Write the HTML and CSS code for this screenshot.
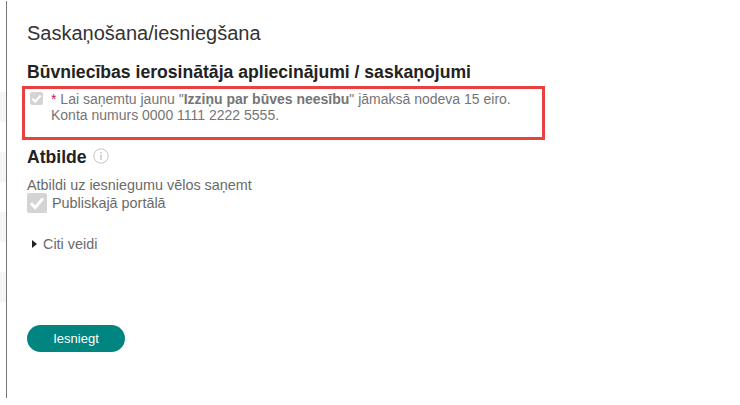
FILE: index.html
```html
<!DOCTYPE html>
<html lang="lv">
<head>
    <meta charset="UTF-8">
    <title>Saskaņošana/iesniegšana</title>
    <link rel="stylesheet" href="styles.css">
</head>
<body>
    <div class="side">
        <div class="side-row"></div>
        <div class="side-row"></div>
        <div class="side-row"></div>
        <div class="side-row"></div>
    </div>
    <main class="content">
        <h1>Saskaņošana/iesniegšana</h1>
        <h2 class="section-title">Būvniecības ierosinātāja apliecinājumi / saskaņojumi</h2>
        <div class="notice">
            <span class="check check-small">
                <svg viewBox="0 0 14 14" width="13" height="13"><path d="M2.6 7.2 5.7 10.3 11.4 3.8" fill="none" stroke="#fff" stroke-width="2.2"/></svg>
            </span>
            <p><span class="star">*</span> Lai saņemtu jaunu "<b>Izziņu par būves neesību</b>" jāmaksā nodeva 15 eiro.<br>Konta numurs 0000 1111 2222 5555.</p>
        </div>
        <div class="answer-title">
            <h2>Atbilde</h2>
            <svg class="info" viewBox="0 0 16 16" width="16" height="16">
                <circle cx="8" cy="8" r="7.2" fill="none" stroke="#c4c4c4" stroke-width="1"/>
                <circle cx="8" cy="4.6" r="0.9" fill="#c4c4c4"/>
                <rect x="7.3" y="6.8" width="1.4" height="5.2" fill="#c4c4c4"/>
            </svg>
        </div>
        <p class="answer-text">Atbildi uz iesniegumu vēlos saņemt</p>
        <label class="portal">
            <span class="check check-big">
                <svg viewBox="0 0 20 20" width="20" height="20"><path d="M4 10.4 8.2 14.6 16 5.4" fill="none" stroke="#fff" stroke-width="3"/></svg>
            </span>
            Publiskajā portālā
        </label>
        <div class="other"><span class="arrow"></span>Citi veidi</div>
        <button class="submit" type="button">Iesniegt</button>
    </main>
</body>
</html>
```

FILE: styles.css
```css
body {
    margin: 0;
    height: 405px;
    display: flex;
    background-color: #fff;
    font-family: "Liberation Sans", Arial, sans-serif;
    color: #6a6a6a;
    font-size: 14px;
    overflow: hidden;
}
.side {
    width: 7px;
    height: 397px;
    margin-top: 1px;
    padding-top: 91px;
    flex-shrink: 0;
    border-right: 1px solid #777;
    box-sizing: border-box;
}
.side-row {
    height: 30px;
    margin-bottom: 30px;
    background-color: #f5f5f5;
}
.content {
    padding: 20px 0 0 20px;
    flex: 1;
}
h1 {
    margin: 0;
    font-size: 20px;
    line-height: 26px;
    font-weight: normal;
    color: #333;
}
.section-title {
    margin: 14px 0 0;
    font-size: 17.6px;
    line-height: 24px;
    font-weight: bold;
    color: #222;
}
.notice {
    display: flex;
    width: 523px;
    height: 54px;
    margin: 2px 0 0 -5px;
    padding: 2px 0 0 5px;
    border: 3px solid #e8413f;
    box-sizing: border-box;
}
.notice p {
    margin: 0 0 0 8px;
    line-height: 16px;
    color: #757575;
}
.star {
    color: #c2185b;
}
.check {
    display: inline-flex;
    background-color: #d4d4d4;
    border-radius: 2px;
    flex-shrink: 0;
}
.check-small {
    width: 13px;
    height: 13px;
    margin-top: 1px;
}
.check-big {
    width: 20px;
    height: 20px;
    margin-right: 5px;
}
.answer-title {
    display: flex;
    align-items: center;
    gap: 6px;
    margin-top: 5px;
}
.answer-title h2 {
    margin: 0;
    font-size: 17.6px;
    line-height: 24px;
    color: #222;
}
.info {
    margin-top: -2px;
}
.answer-text {
    margin: 8px 0 0;
    font-size: 14.4px;
    line-height: 16px;
}
.portal {
    display: flex;
    align-items: flex-start;
    font-size: 14.4px;
    line-height: 20px;
}
.other {
    display: flex;
    align-items: center;
    margin: 23px 0 0 5px;
    font-size: 14.4px;
    line-height: 16px;
}
.arrow {
    width: 0;
    height: 0;
    border-left: 5px solid #222;
    border-top: 4px solid transparent;
    border-bottom: 4px solid transparent;
    margin-right: 6px;
}
.submit {
    display: block;
    width: 98px;
    height: 27px;
    margin-top: 73px;
    padding: 0;
    border: none;
    border-radius: 14px;
    background-color: #008580;
    color: #fff;
    font-family: inherit;
    font-size: 13px;
}
```
